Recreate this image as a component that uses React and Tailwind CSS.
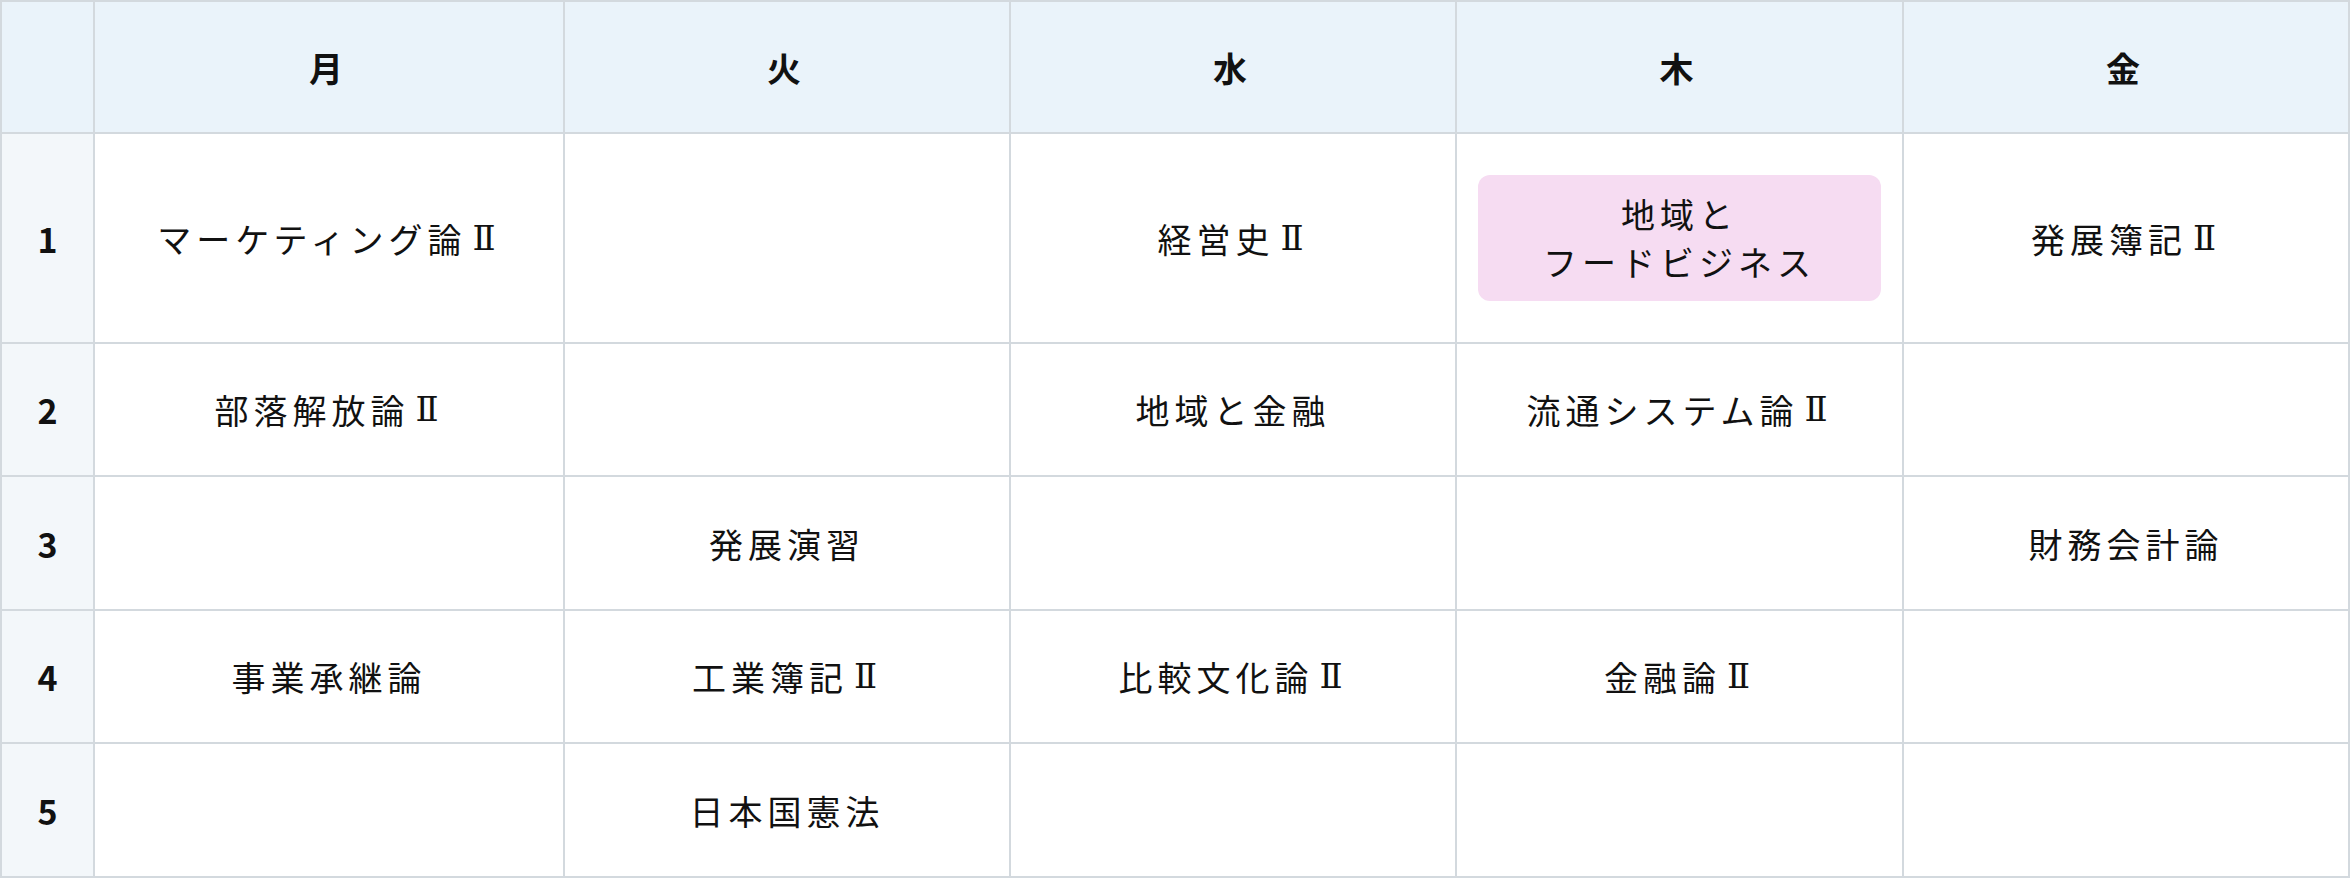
const DAYS = ['月', '火', '水', '木', '金'];

const TIMETABLE = [
  ['マーケティング論Ⅱ', '', '経営史Ⅱ', { chip: ['地域と', 'フードビジネス'] }, '発展簿記Ⅱ'],
  ['部落解放論Ⅱ', '', '地域と金融', '流通システム論Ⅱ', ''],
  ['', '発展演習', '', '', '財務会計論'],
  ['事業承継論', '工業簿記Ⅱ', '比較文化論Ⅱ', '金融論Ⅱ', ''],
  ['', '日本国憲法', '', '', ''],
];

const cell = 'border-r-2 border-b-2 border-[#d3d9de] flex items-center justify-center';

// the roman numeral is drawn with a serif face so it keeps its bars
function Subject({ name }) {
  if (!name.endsWith('Ⅱ')) return name;
  return (
    <>
      {name.slice(0, -1)}
      <span className="ml-[6px] font-['DejaVu_Serif',serif]">Ⅱ</span>
    </>
  );
}

export default function App() {
  return (
    <div className="w-[2350px] h-[879px] bg-white text-[#111111] font-['Noto_Sans_CJK_JP','Noto_Sans',sans-serif]">
      <div className="grid grid-cols-[93px_470px_446px_446px_447px_446px] grid-rows-[132px_210px_133px_134px_133px_134px] border-l-2 border-t-2 border-[#d3d9de]">
        {/* header row */}
        <div className={`${cell} bg-[#eaf3fa]`} />
        {DAYS.map((d) => (
          <div key={d} className={`${cell} bg-[#eaf3fa] text-[34px] font-bold tracking-[6px]`}>
            {d}
          </div>
        ))}

        {TIMETABLE.map((row, i) => (
          <div key={i} className="contents">
            <div className={`${cell} bg-[#f3f7fa] text-[34px] font-bold`}>{i + 1}</div>
            {row.map((c, j) =>
              typeof c === 'object' ? (
                <div key={j} className={`${cell} px-[21px]`}>
                  <div className="w-full h-[126px] rounded-[12px] bg-[#f6dcf2] flex flex-col items-center justify-center text-[34px] leading-[48px] tracking-[5px] text-center">
                    {c.chip.map((line) => (
                      <span key={line}>{line}</span>
                    ))}
                  </div>
                </div>
              ) : (
                <div key={j} className={`${cell} text-[34px] tracking-[5px]`}>
                  <Subject name={c} />
                </div>
              )
            )}
          </div>
        ))}
      </div>
    </div>
  );
}
